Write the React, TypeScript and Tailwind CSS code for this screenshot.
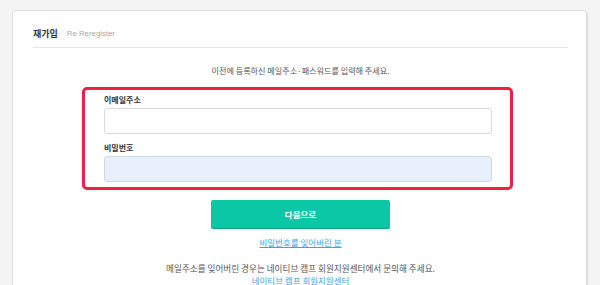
const kr = "font-['Noto_Sans_CJK_KR','Noto_Sans',sans-serif]";

export default function App() {
  return (
    <div className={`h-[285px] w-[600px] overflow-hidden bg-[#f4f4f4] pt-[10px] ${kr}`}>
      <div className="ml-[12px] h-[290px] w-[575px] rounded-t-[4px] border border-[#dcdcdc] bg-white pl-[20px] pr-[18px] shadow-[1px_1px_1px_rgba(0,0,0,0.08)]">
        <div className="flex items-center gap-[9px] border-b border-[#e6e6e6] pt-[17px] pb-[7px]">
          <span className="text-[9px] leading-[12px] font-bold text-[#333]">재가입</span>
          <span className="font-['Liberation_Sans',Arial,sans-serif] text-[7.8px] leading-[12px] text-[#a8a8a8]">Re Reregister</span>
        </div>

        <p className="mt-[17px] text-center text-[8.1px] leading-[12px] text-[#555]">
          이전에 등록하신 메일주소·패스워드를 입력해 주세요.
        </p>

        <div className="mt-[10px] ml-[49px] w-[431px] rounded-[5px] border-[3px] border-[#f21f44] pt-[5px] pr-[18px] pb-[5px] pl-[19px]">
          <label className="block text-[8px] leading-[10px] font-bold text-[#333]">이메일주소</label>
          <div className="mt-[3px] h-[26px] rounded-[3px] border border-[#d9d9d9] bg-white" />
          <label className="mt-[9px] block text-[8px] leading-[10px] font-bold text-[#333]">비밀번호</label>
          <div className="mt-[3px] h-[26px] rounded-[3px] border border-[#d3d8e0] bg-[#e8f0fe]" />
        </div>

        <div className="flex flex-col items-center">
          <button className="mt-[10px] flex h-[29px] w-[179px] items-center justify-center rounded-[2px] border-b border-[#0aa98c] bg-[#0bc7a5] text-[8.5px] font-bold text-white">
            다음으로
          </button>
          <a className="mt-[8px] text-[8.5px] leading-[10px] text-[#3aa3e6] underline">비밀번호를 잊어버린 분</a>
          <p className="mt-[15px] text-[8.6px] leading-[12px] text-[#555]">
            메일주소를 잊어버린 경우는 네이티브 캠프 회원지원센터에서 문의해 주세요.
          </p>
          <a className="text-[8.5px] leading-[12px] text-[#3aa3e6] underline">네이티브 캠프 회원지원센터</a>
        </div>
      </div>
    </div>
  );
}
